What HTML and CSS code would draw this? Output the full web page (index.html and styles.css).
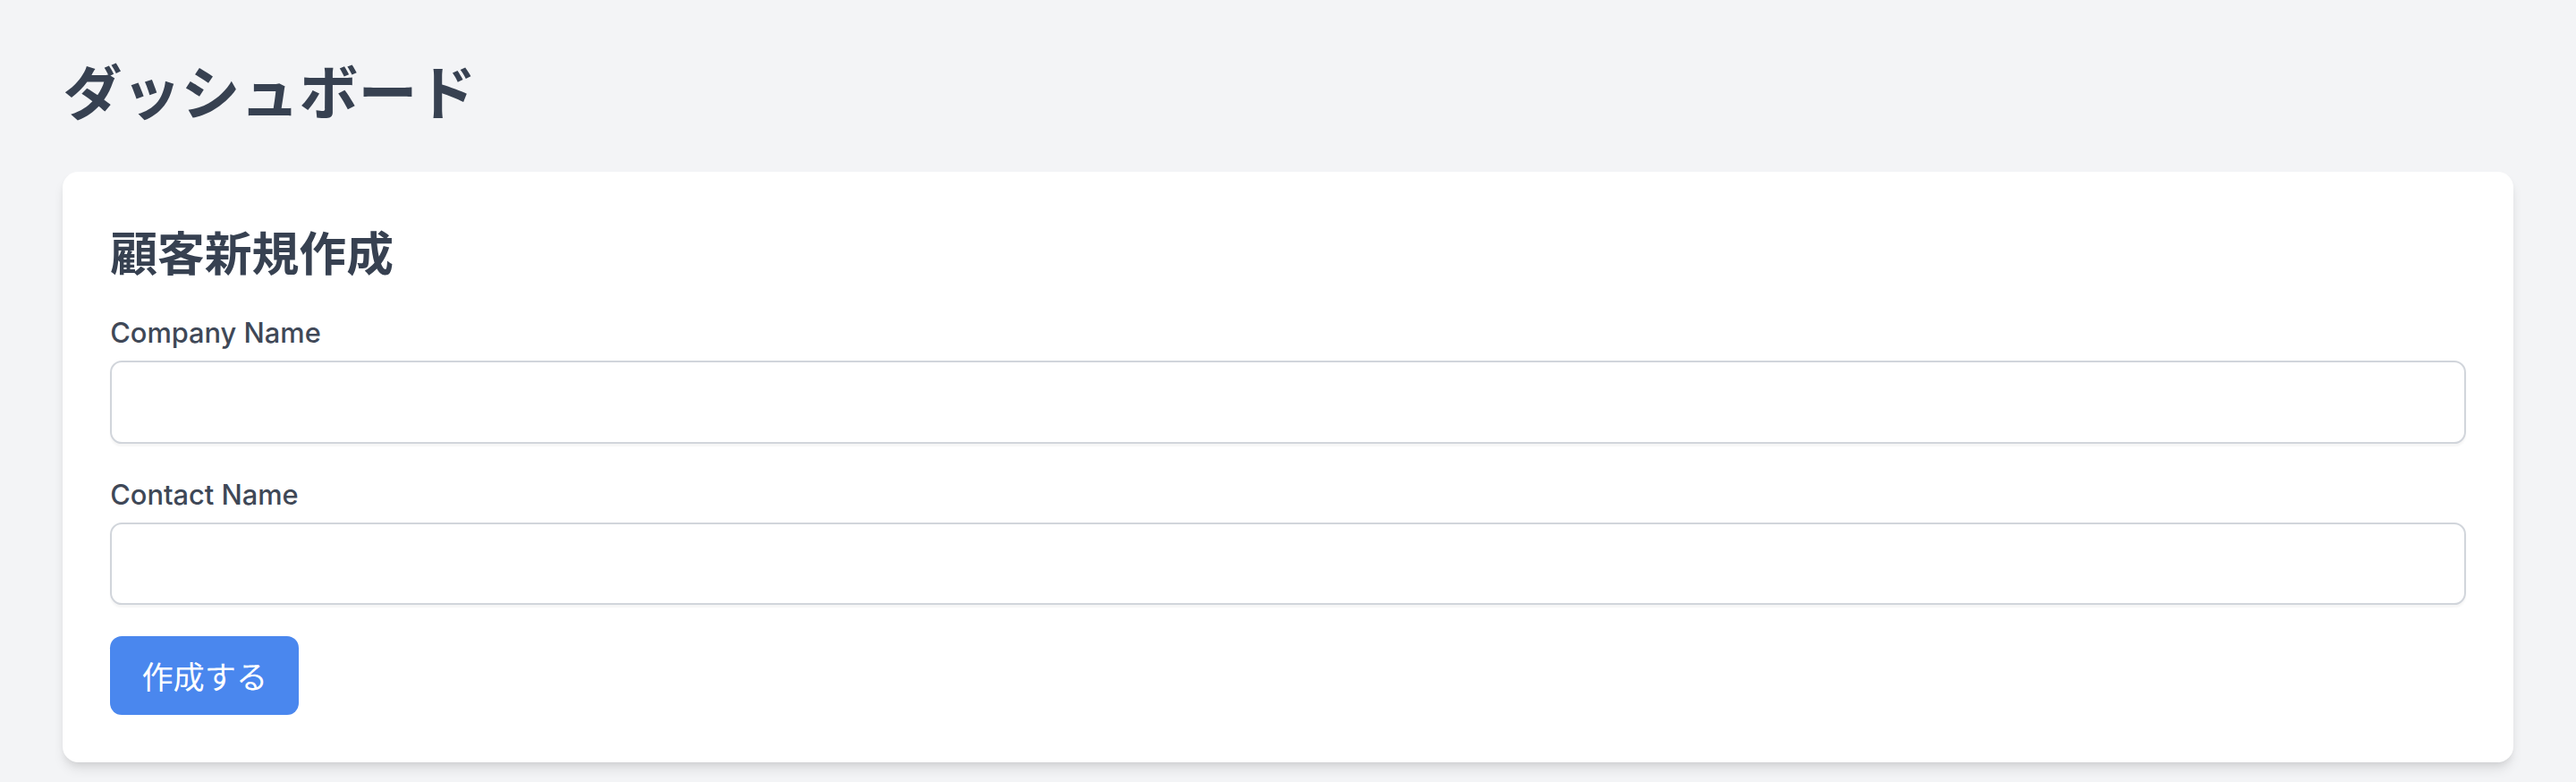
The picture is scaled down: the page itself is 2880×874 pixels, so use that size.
FILE: index.html
```html
<!DOCTYPE html>
<html lang="ja">
<head>
<meta charset="utf-8">
<title>ダッシュボード</title>
<link rel="stylesheet" href="styles.css">
</head>
<body>
<main class="page">
  <h1 class="page-title">ダッシュボード</h1>
  <section class="card">
    <h2 class="card-title">顧客新規作成</h2>
    <form class="form">
      <div class="field">
        <label class="label" for="company">Company Name</label>
        <input class="input" id="company" type="text">
      </div>
      <div class="field">
        <label class="label" for="contact">Contact Name</label>
        <input class="input" id="contact" type="text">
      </div>
      <div class="actions">
        <button class="btn" type="button">作成する</button>
      </div>
    </form>
  </section>
</main>
</body>
</html>
```

FILE: styles.css
```css
* { box-sizing: border-box; }
html, body { margin: 0; padding: 0; }
body {
  background: #f3f4f6;
  font-family: Inter, "Noto Sans CJK JP", sans-serif;
  color: #374151;
}
.page {
  padding: 60px 70.4px 24px;
}
.page-title {
  margin: 0 0 52.8px;
  font-family: "Noto Sans CJK JP", sans-serif;
  font-size: 66px;
  line-height: 79.2px;
  font-weight: 700;
  color: #374151;
}
.card {
  background: #ffffff;
  border-radius: 17.6px;
  padding: 52.8px;
  box-shadow: 0 8.8px 13.2px -2.2px rgba(0,0,0,0.1), 0 4.4px 8.8px -4.4px rgba(0,0,0,0.1);
}
.card-title {
  margin: 0 0 35.2px;
  font-family: "Noto Sans CJK JP", sans-serif;
  font-size: 52.8px;
  line-height: 70.4px;
  font-weight: 700;
  color: #374151;
}
.form { display: flex; flex-direction: column; }
.field { display: flex; flex-direction: column; margin-bottom: 35.2px; }
.label {
  display: block;
  margin-bottom: 8.8px;
  font-family: Inter, sans-serif;
  font-size: 30.8px;
  line-height: 44px;
  font-weight: 500;
  color: #3f4857;
}
.input {
  display: block;
  width: 100%;
  height: 92.4px;
  border: 2.2px solid #d1d5db;
  border-radius: 13.2px;
  background: #fff;
  padding: 8.8px 26.4px;
  font-size: 35.2px;
  font-family: Inter, sans-serif;
  box-shadow: 0 2.2px 2.2px rgba(0,0,0,0.04);
  outline: none;
}
.actions { display: flex; }
.btn {
  background: #4a87ee;
  color: #ffffff;
  border: none;
  border-radius: 13.2px;
  padding: 17.6px 35.2px;
  height: 88px;
  font-family: "Noto Sans CJK JP", sans-serif;
  font-size: 35.2px;
  line-height: 52.8px;
  font-weight: 400;
}
```
